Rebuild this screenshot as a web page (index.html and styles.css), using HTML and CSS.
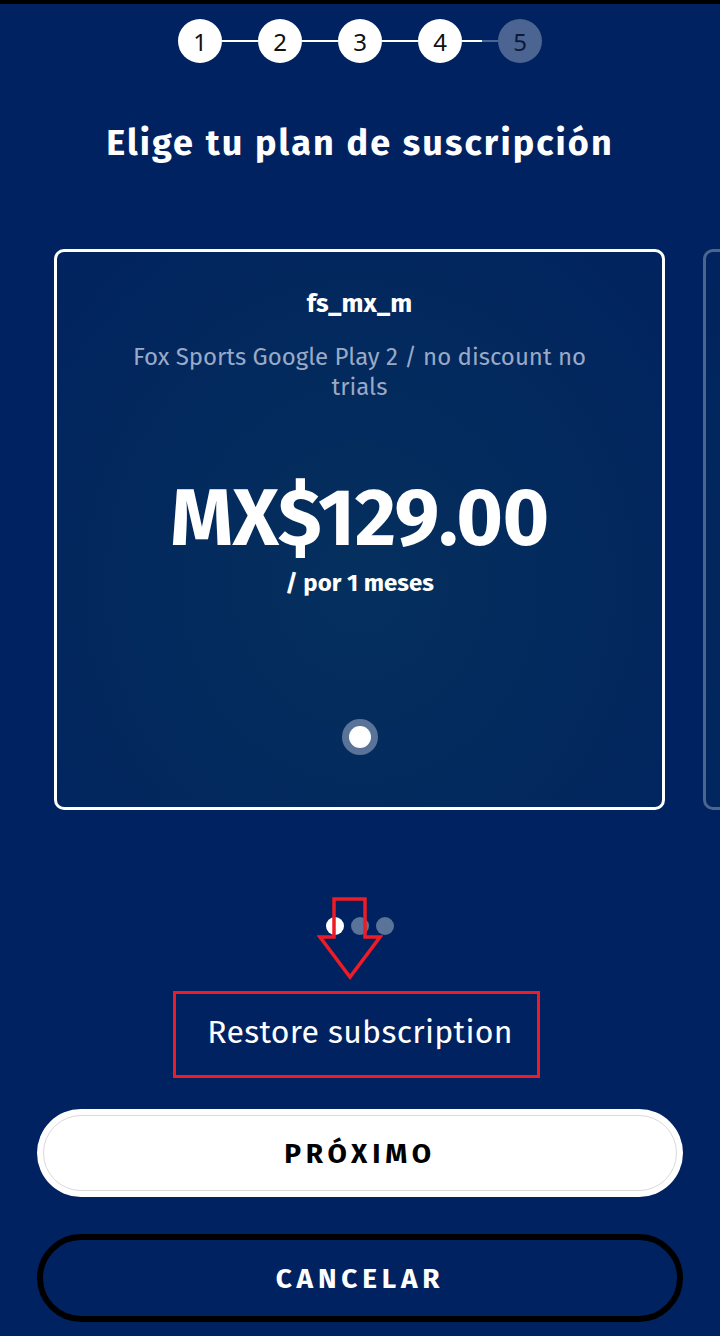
FILE: index.html
```html
<!DOCTYPE html>
<html lang="es">
<head>
<meta charset="utf-8">
<title>Elige tu plan</title>
<link rel="stylesheet" href="styles.css">
</head>
<body>
<div class="screen">
  <div class="stepper">
    <div class="step done">1</div>
    <div class="link"></div>
    <div class="step done">2</div>
    <div class="link"></div>
    <div class="step done">3</div>
    <div class="link"></div>
    <div class="step done">4</div>
    <div class="link half"></div>
    <div class="step current">5</div>
  </div>

  <h1 class="title">Elige tu plan de suscripción</h1>

  <div class="carousel">
    <div class="card active">
      <div class="plan-id">fs_mx_m</div>
      <div class="plan-desc">Fox Sports Google Play 2 / no discount no trials</div>
      <div class="price">MX$129.00</div>
      <div class="period">/ por 1 meses</div>
      <div class="radio"><span class="radio-inner"></span></div>
    </div>
    <div class="card next"></div>
  </div>

  <div class="pager">
    <span class="dot on"></span>
    <span class="dot"></span>
    <span class="dot"></span>
    <svg class="arrow" width="66" height="84" viewBox="0 0 66 84">
      <polygon points="17,2 48,2 48,40 63,40 33,80 3,40 17,40" fill="none" stroke="#ee1c25" stroke-width="3.5" stroke-linejoin="miter"/>
    </svg>
  </div>

  <div class="restore-wrap">
    <div class="restore">Restore subscription</div>
  </div>

  <div class="actions">
    <button class="btn primary"><span>PRÓXIMO</span></button>
    <button class="btn secondary">CANCELAR</button>
  </div>
</div>
</body>
</html>
```

FILE: styles.css
```css
* { box-sizing: border-box; }
html, body {
  margin: 0;
  padding: 0;
  background: #012260;
}
body {
  font-family: "Fira Sans", Lato, "Noto Sans", sans-serif;
  color: #fff;
}
.screen {
  width: 720px;
  height: 1336px;
  border-top: 4px solid #000;
  background: #012260;
  overflow: hidden;
}
.stepper {
  display: flex;
  justify-content: center;
  align-items: center;
  margin-top: 15px;
  height: 44px;
}
.step {
  width: 44px;
  height: 44px;
  border-radius: 50%;
  background: #fff;
  color: #111;
  display: flex;
  align-items: center;
  justify-content: center;
  font-size: 24px;
  font-family: "Noto Sans", sans-serif;
}
.step.current {
  background: #4b6491;
  color: #0c1a36;
}
.link {
  width: 36px;
  height: 2px;
  background: #fff;
}
.link.half {
  background: linear-gradient(to right, #fff 0, #fff 20px, #4b6491 20px);
}
.title {
  margin: 58px 0 0;
  text-align: center;
  font-size: 36px;
  font-weight: 700;
  letter-spacing: 2.1px;
  line-height: 44px;
}
.carousel {
  display: flex;
  gap: 38px;
  padding-left: 54px;
  margin-top: 84px;
}
.card {
  flex: 0 0 611px;
  height: 561px;
  border: 3px solid #fff;
  border-radius: 10px;
  background: radial-gradient(ellipse at 50% 60%, #05305e 0%, #032a5d 45%, #01235f 100%);
  display: flex;
  flex-direction: column;
  align-items: center;
  padding: 38px 40px 0;
}
.card.next {
  border-color: #4a6590;
}
.plan-id {
  font-size: 26px;
  font-weight: 700;
  line-height: 28px;
}
.plan-desc {
  margin-top: 24px;
  width: 500px;
  text-align: center;
  color: #9aa9c6;
  font-size: 24px;
  line-height: 30px;
}
.price {
  margin-top: 71px;
  font-size: 80px;
  font-weight: 700;
  line-height: 90px;
  letter-spacing: -0.6px;
}
.period {
  margin-top: 6px;
  font-size: 24px;
  font-weight: 700;
  line-height: 28px;
}
.radio {
  margin-top: auto;
  margin-bottom: 52px;
  width: 36px;
  height: 36px;
  border-radius: 50%;
  background: #5a7499;
  display: flex;
  align-items: center;
  justify-content: center;
}
.radio-inner {
  width: 22px;
  height: 22px;
  border-radius: 50%;
  background: #fff;
}
.pager {
  position: relative;
  display: flex;
  justify-content: center;
  gap: 7px;
  margin-top: 107px;
  height: 18px;
}
.dot {
  width: 18px;
  height: 18px;
  border-radius: 50%;
  background: #5a7499;
}
.dot.on { background: #fff; }
.arrow {
  position: absolute;
  left: 317px;
  top: -20px;
}
.restore-wrap {
  display: flex;
  justify-content: center;
  margin-top: 56px;
  padding-right: 8px;
}
.restore {
  width: 367px;
  height: 87px;
  border: 3px solid #ee1c25;
  display: flex;
  align-items: center;
  justify-content: center;
  font-size: 32px;
  letter-spacing: 0.3px;
  padding-left: 8px;
  padding-bottom: 5px;
}
.actions {
  display: flex;
  flex-direction: column;
  align-items: center;
  gap: 37px;
  margin-top: 31px;
}
.btn {
  width: 646px;
  height: 88px;
  border-radius: 44px;
  font-family: "Fira Sans", Lato, "Noto Sans", sans-serif;
  font-size: 28px;
  font-weight: 700;
  letter-spacing: 4.8px;
  display: flex;
  align-items: center;
  justify-content: center;
  padding: 0;
}
.btn.primary {
  background: #fff;
  border: 0;
  color: #000;
  padding: 6px;
}
.btn.primary span {
  flex: 1;
  height: 100%;
  border: 1px solid #d9d9d9;
  border-radius: 38px;
  display: flex;
  align-items: center;
  justify-content: center;
}
.btn.secondary {
  background: #012260;
  border: 6px solid #000;
  color: #fff;
}
```
